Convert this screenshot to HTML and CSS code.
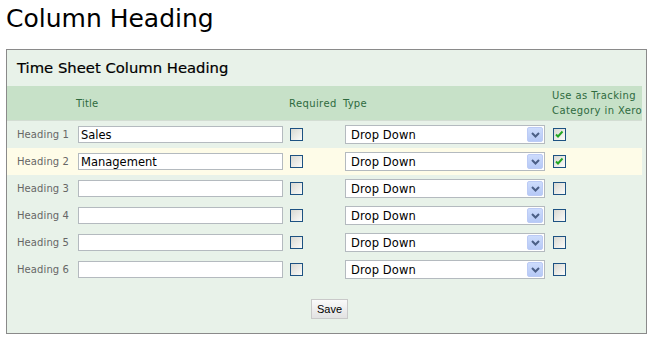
FILE: index.html
```html
<!DOCTYPE html>
<html lang="en">
<head>
  <meta charset="UTF-8">
  <title>Column Heading</title>
  <link rel="stylesheet" href="styles.css">
</head>
<body>
  <h1>Column Heading</h1>

  <div class="panel">
    <h2>Time Sheet Column Heading</h2>

    <div class="grid head">
      <div></div>
      <div>Title</div>
      <div class="req">Required</div>
      <div>Type</div>
      <div class="track">Use as Tracking<br>Category in Xero</div>
    </div>

    <div class="grid row">
      <label>Heading 1</label>
      <input type="text" value="Sales">
      <span class="cb"></span>
      <div class="select"><span>Drop Down</span><span class="arrow"><svg width="9" height="6" viewBox="0 0 9 6"><path d="M1 1 L4.5 4.5 L8 1" fill="none" stroke="#4b5f86" stroke-width="2"/></svg></span></div>
      <span class="cb"><svg width="11" height="11" viewBox="0 0 11 11"><path d="M2 5.5 L4 7.5 L8.5 2.5" fill="none" stroke="#22a622" stroke-width="1.9"/></svg></span>
    </div>

    <div class="grid row hover">
      <label>Heading 2</label>
      <input type="text" value="Management">
      <span class="cb"></span>
      <div class="select"><span>Drop Down</span><span class="arrow"><svg width="9" height="6" viewBox="0 0 9 6"><path d="M1 1 L4.5 4.5 L8 1" fill="none" stroke="#4b5f86" stroke-width="2"/></svg></span></div>
      <span class="cb"><svg width="11" height="11" viewBox="0 0 11 11"><path d="M2 5.5 L4 7.5 L8.5 2.5" fill="none" stroke="#22a622" stroke-width="1.9"/></svg></span>
    </div>

    <div class="grid row">
      <label>Heading 3</label>
      <input type="text" value="">
      <span class="cb"></span>
      <div class="select"><span>Drop Down</span><span class="arrow"><svg width="9" height="6" viewBox="0 0 9 6"><path d="M1 1 L4.5 4.5 L8 1" fill="none" stroke="#4b5f86" stroke-width="2"/></svg></span></div>
      <span class="cb"></span>
    </div>

    <div class="grid row">
      <label>Heading 4</label>
      <input type="text" value="">
      <span class="cb"></span>
      <div class="select"><span>Drop Down</span><span class="arrow"><svg width="9" height="6" viewBox="0 0 9 6"><path d="M1 1 L4.5 4.5 L8 1" fill="none" stroke="#4b5f86" stroke-width="2"/></svg></span></div>
      <span class="cb"></span>
    </div>

    <div class="grid row">
      <label>Heading 5</label>
      <input type="text" value="">
      <span class="cb"></span>
      <div class="select"><span>Drop Down</span><span class="arrow"><svg width="9" height="6" viewBox="0 0 9 6"><path d="M1 1 L4.5 4.5 L8 1" fill="none" stroke="#4b5f86" stroke-width="2"/></svg></span></div>
      <span class="cb"></span>
    </div>

    <div class="grid row">
      <label>Heading 6</label>
      <input type="text" value="">
      <span class="cb"></span>
      <div class="select"><span>Drop Down</span><span class="arrow"><svg width="9" height="6" viewBox="0 0 9 6"><path d="M1 1 L4.5 4.5 L8 1" fill="none" stroke="#4b5f86" stroke-width="2"/></svg></span></div>
      <span class="cb"></span>
    </div>

    <div class="actions">
      <button type="button">Save</button>
    </div>
  </div>
</body>
</html>
```

FILE: styles.css
```css
body {
  font-family: "DejaVu Sans", Verdana, sans-serif;
  background: #fff;
  margin: 0;
  padding: 0 3px 0 6px;
}

h1 {
  margin: 0 0 11px;
  font-size: 25px;
  line-height: 38px;
  font-weight: normal;
  color: #000;
}

.panel {
  width: 641px;
  box-sizing: border-box;
  border: 1px solid #8a8a8a;
  background: #e8f2e9;
  padding-bottom: 14px;
}

h2 {
  margin: 0;
  padding-left: 10px;
  height: 36px;
  line-height: 36px;
  font-size: 14.8px;
  font-weight: normal;
  color: #000;
  -webkit-text-stroke: 0.2px #000;
}

.grid {
  display: grid;
  grid-template-columns: 61px 212px 55px 208px 1fr;
  align-items: center;
  width: 635px;
  box-sizing: border-box;
  padding-left: 10px;
}

.head {
  grid-template-columns: 59px 213px 54px 209px 1fr;
  height: 35px;
  background: #c7e1c8;
  border-bottom: 1px solid #d3ddd3;
  color: #2e6a3e;
  font-size: 10px;
  line-height: 15px;
  letter-spacing: 0.2px;
}

.head .req {
  letter-spacing: 0.4px;
}

.head .track {
  letter-spacing: 0.4px;
  white-space: nowrap;
}

.row {
  height: 27px;
  font-size: 10px;
  color: #666;
  letter-spacing: 0.1px;
}

.row.hover {
  background: #fefce8;
}

.row input {
  width: 205px;
  height: 17px;
  box-sizing: border-box;
  border: 1px solid #b4babf;
  padding: 0 2px;
  margin: 0;
  font-family: "DejaVu Sans", Verdana, sans-serif;
  font-size: 11.5px;
  color: #000;
  background: #fff;
}

.cb {
  width: 13px;
  height: 13px;
  box-sizing: border-box;
  border: 1px solid #1d5282;
  background: linear-gradient(135deg, #d9d9d2, #fbfbf9);
  display: flex;
  align-items: center;
  justify-content: center;
}

.select {
  width: 200px;
  height: 19px;
  box-sizing: border-box;
  border: 1px solid #b4babf;
  background: #fff;
  display: flex;
  align-items: center;
  justify-content: space-between;
  padding: 0 1px 0 5px;
  font-size: 11.5px;
  color: #000;
}

.arrow {
  width: 16px;
  height: 15px;
  box-sizing: border-box;
  border: 1px solid #bccbf5;
  border-radius: 2px;
  background: linear-gradient(#cddcfc, #b6c9f6);
  display: flex;
  align-items: center;
  justify-content: center;
}

.actions {
  width: 635px;
  box-sizing: border-box;
  padding: 15px 0 0 10px;
  text-align: center;
}

.actions button {
  height: 20px;
  padding: 0 5px;
  border: 1px solid #c9c9c9;
  background: linear-gradient(#fafafa, #e2e2e2);
  font-family: "Liberation Sans", Arial, sans-serif;
  font-size: 11px;
  color: #000;
  cursor: pointer;
}
```
